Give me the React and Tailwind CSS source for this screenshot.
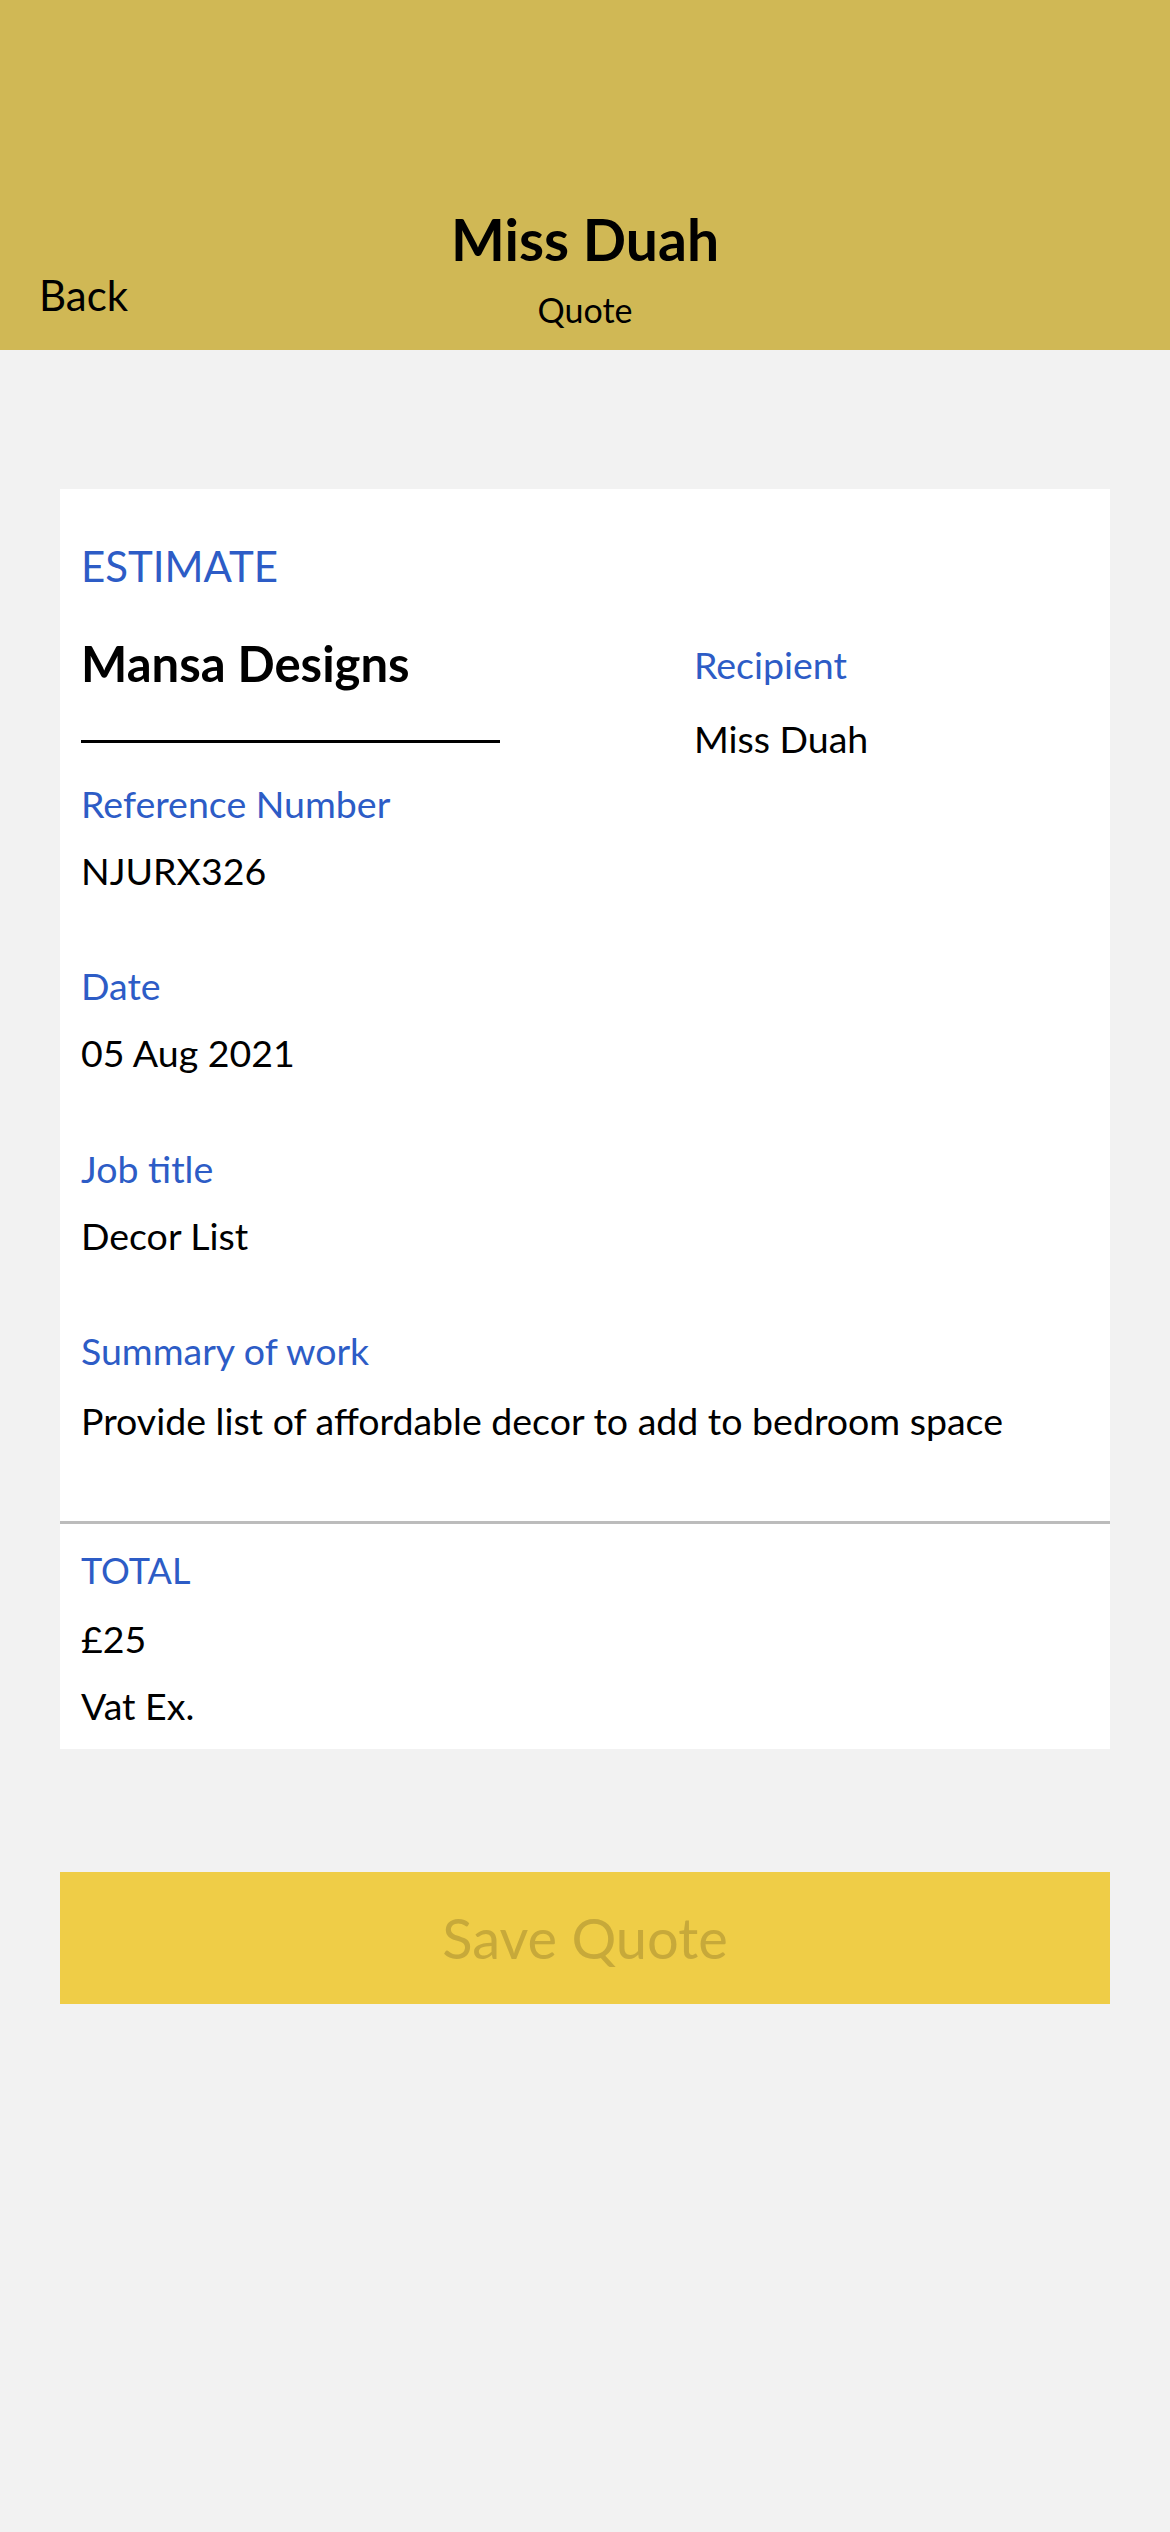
import React from "react";

const Field = ({ label, value, className = "", gap = "mt-[19px]" }) => (
  <div className={className}>
    <div className="text-[37.5px] leading-[48px] text-[#2d5cc6]">{label}</div>
    <div className={`${gap} text-[37.5px] leading-[48px] text-black`}>{value}</div>
  </div>
);

export default function App() {
  return (
    <div
      className="min-h-screen bg-[#f2f2f2]"
      style={{ fontFamily: "Lato, 'Open Sans', sans-serif" }}
    >
      {/* header */}
      <header className="h-[350px] bg-[#d0b855] grid grid-cols-[1fr_auto_1fr] items-end pb-[20px]">
        <button className="justify-self-start ml-[39px] mb-[10px] text-[42px] leading-[50px] text-black">
          Back
        </button>
        <div className="flex flex-col items-center">
          <h1 className="text-[57px] leading-[60px] font-bold text-black">Miss Duah</h1>
          <div className="mt-[21px] text-[34px] leading-[40px] text-black">Quote</div>
        </div>
        <div />
      </header>

      {/* quote card */}
      <div className="mx-[60px] mt-[139px] bg-white pt-[53px] pb-[19px]">
        <div className="px-[21px]">
          <div className="text-[42px] leading-[48px] text-[#2d5cc6]">ESTIMATE</div>

          <div className="mt-[43px] flex items-start">
            <div className="w-[419px]">
              <div className="text-[49px] leading-[60px] font-bold text-black">Mansa Designs</div>
              <div className="mt-[47px] h-[3px] bg-black" />
            </div>
            <div className="ml-[194px] pt-[8px]">
              <div className="text-[37.5px] leading-[48px] text-[#2d5cc6]">Recipient</div>
              <div className="mt-[26px] text-[37.5px] leading-[48px] text-black">Miss Duah</div>
            </div>
          </div>

          <Field className="mt-[17px]" label="Reference Number" value="NJURX326" />
          <Field className="mt-[67px]" label="Date" value="05 Aug 2021" />
          <Field className="mt-[68px]" label="Job title" value="Decor List" />
          <Field
            className="mt-[67px]"
            gap="mt-[22px]"
            label="Summary of work"
            value="Provide list of affordable decor to add to bedroom space"
          />
        </div>

        <div className="mt-[76px] h-[3px] bg-[#bcbcbc]" />

        <div className="px-[21px] pt-[22px]">
          <div className="text-[36px] leading-[48px] text-[#2d5cc6]">TOTAL</div>
          <div className="mt-[21px] text-[37.5px] leading-[48px] text-black">£25</div>
          <div className="mt-[19px] text-[37.5px] leading-[48px] text-black">Vat Ex.</div>
        </div>
      </div>

      <button className="mx-[60px] mt-[123px] w-[1050px] h-[132px] bg-[#efcd47] text-[56px] text-[#c7a93a]">
        Save Quote
      </button>
    </div>
  );
}
